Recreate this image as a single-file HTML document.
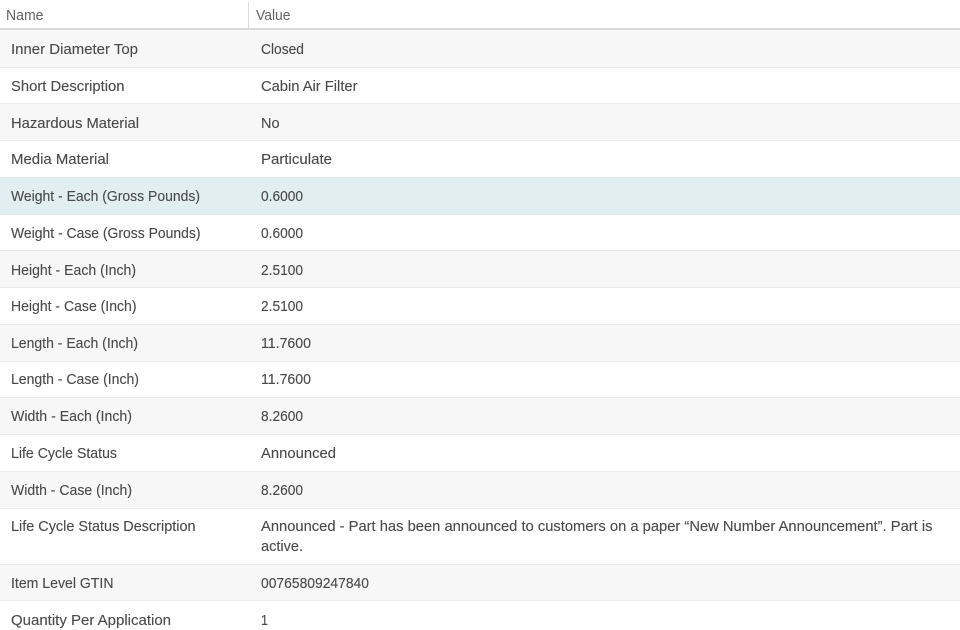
<!DOCTYPE html>
<html lang="en">
<head>
<meta charset="utf-8">
<title>Attributes</title>
<style>
html,body{margin:0;padding:0;background:#fff;width:960px;height:630px;overflow:hidden}
svg{display:block}
text{font-family:"Liberation Sans",sans-serif;font-size:14.6px;fill:#4a4a4a;stroke:#4a4a4a;stroke-width:.12px}
text.h{fill:#636363;stroke:none;font-size:14.4px}
</style>
</head>
<body>
<svg width="960" height="630" viewBox="0 0 960 630" xmlns="http://www.w3.org/2000/svg">
<rect width="960" height="630" fill="#fff"/>
<!-- row backgrounds -->
<rect y="30" width="960" height="37" fill="#f7f7f7"/>
<rect y="104" width="960" height="36" fill="#f7f7f7"/>
<rect y="178" width="960" height="36" fill="#e2eff2"/>
<rect y="251" width="960" height="36" fill="#f7f7f7"/>
<rect y="325" width="960" height="36" fill="#f7f7f7"/>
<rect y="398" width="960" height="36" fill="#f7f7f7"/>
<rect y="472" width="960" height="36" fill="#f7f7f7"/>
<rect y="565" width="960" height="35" fill="#f7f7f7"/>
<!-- lines -->
<rect y="28" width="960" height="2" fill="#d8d8d8"/>
<rect x="248" y="2" width="1" height="26" fill="#dcdcdc"/>
<g fill="#e9e9e9">
<rect y="67" width="960" height="1"/>
<rect y="103" width="960" height="1"/>
<rect y="140" width="960" height="1"/>
<rect y="177" width="960" height="1" fill="#d8e4e8"/>
<rect y="214" width="960" height="1" fill="#d8e4e8"/>
<rect y="250" width="960" height="1"/>
<rect y="287" width="960" height="1"/>
<rect y="324" width="960" height="1"/>
<rect y="361" width="960" height="1"/>
<rect y="397" width="960" height="1"/>
<rect y="434" width="960" height="1"/>
<rect y="471" width="960" height="1"/>
<rect y="508" width="960" height="1"/>
<rect y="564" width="960" height="1"/>
<rect y="600" width="960" height="1"/>
</g>
<!-- header -->
<text class="h" x="6" y="20" textLength="37.5" lengthAdjust="spacingAndGlyphs">Name</text>
<text class="h" x="256" y="20" textLength="34.5" lengthAdjust="spacingAndGlyphs">Value</text>
<!-- names -->
<g>
<text x="11" y="54" textLength="127" lengthAdjust="spacingAndGlyphs">Inner Diameter Top</text>
<text x="11" y="91" textLength="113.5" lengthAdjust="spacingAndGlyphs">Short Description</text>
<text x="11" y="128" textLength="128" lengthAdjust="spacingAndGlyphs">Hazardous Material</text>
<text x="11" y="164" textLength="98" lengthAdjust="spacingAndGlyphs">Media Material</text>
<text x="11" y="201" textLength="189" lengthAdjust="spacingAndGlyphs">Weight - Each (Gross Pounds)</text>
<text x="11" y="238" textLength="189.5" lengthAdjust="spacingAndGlyphs">Weight - Case (Gross Pounds)</text>
<text x="11" y="275" textLength="125" lengthAdjust="spacingAndGlyphs">Height - Each (Inch)</text>
<text x="11" y="311" textLength="125.5" lengthAdjust="spacingAndGlyphs">Height - Case (Inch)</text>
<text x="11" y="348" textLength="127" lengthAdjust="spacingAndGlyphs">Length - Each (Inch)</text>
<text x="11" y="384" textLength="128" lengthAdjust="spacingAndGlyphs">Length - Case (Inch)</text>
<text x="11" y="421" textLength="121" lengthAdjust="spacingAndGlyphs">Width - Each (Inch)</text>
<text x="11" y="458" textLength="106" lengthAdjust="spacingAndGlyphs">Life Cycle Status</text>
<text x="11" y="495" textLength="121" lengthAdjust="spacingAndGlyphs">Width - Case (Inch)</text>
<text x="11" y="531" textLength="184.5" lengthAdjust="spacingAndGlyphs">Life Cycle Status Description</text>
<text x="11" y="588" textLength="102.5" lengthAdjust="spacingAndGlyphs">Item Level GTIN</text>
<text x="11" y="625" textLength="160" lengthAdjust="spacingAndGlyphs">Quantity Per Application</text>
</g>
<!-- values -->
<g>
<text x="261" y="54" textLength="43" lengthAdjust="spacingAndGlyphs">Closed</text>
<text x="261" y="91" textLength="96.5" lengthAdjust="spacingAndGlyphs">Cabin Air Filter</text>
<text x="261" y="128" textLength="18.5" lengthAdjust="spacingAndGlyphs">No</text>
<text x="261" y="164" textLength="71" lengthAdjust="spacingAndGlyphs">Particulate</text>
<text x="261" y="201" textLength="42" lengthAdjust="spacingAndGlyphs">0.6000</text>
<text x="261" y="238" textLength="42" lengthAdjust="spacingAndGlyphs">0.6000</text>
<text x="261" y="275" textLength="42" lengthAdjust="spacingAndGlyphs">2.5100</text>
<text x="261" y="311" textLength="42" lengthAdjust="spacingAndGlyphs">2.5100</text>
<text x="261" y="348" textLength="50" lengthAdjust="spacingAndGlyphs">11.7600</text>
<text x="261" y="384" textLength="50" lengthAdjust="spacingAndGlyphs">11.7600</text>
<text x="261" y="421" textLength="42" lengthAdjust="spacingAndGlyphs">8.2600</text>
<text x="261" y="458" textLength="75" lengthAdjust="spacingAndGlyphs">Announced</text>
<text x="261" y="495" textLength="42" lengthAdjust="spacingAndGlyphs">8.2600</text>
<text x="261" y="531" textLength="671.5" lengthAdjust="spacingAndGlyphs">Announced - Part has been announced to customers on a paper “New Number Announcement”. Part is</text>
<text x="261" y="551" textLength="42" lengthAdjust="spacingAndGlyphs">active.</text>
<text x="261" y="588" textLength="108" lengthAdjust="spacingAndGlyphs">00765809247840</text>
<text x="261" y="625" textLength="7" lengthAdjust="spacingAndGlyphs">1</text>
</g>
</svg>
</body>
</html>
